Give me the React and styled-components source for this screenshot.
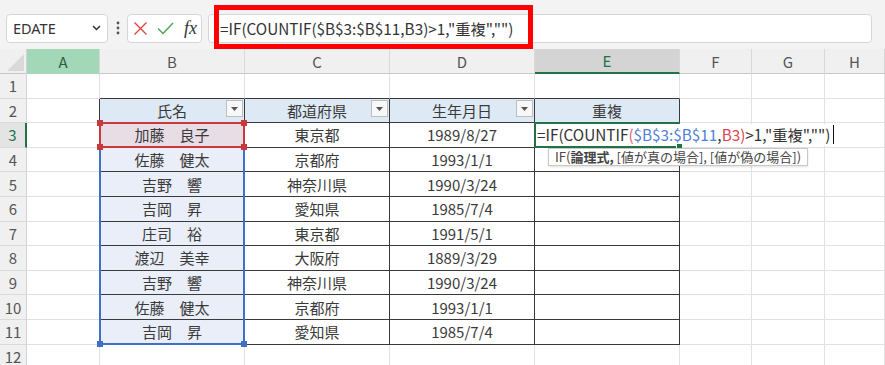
import React from 'react';
import styled, { createGlobalStyle, css } from 'styled-components';

const Global = createGlobalStyle`
  html, body { margin: 0; padding: 0; background: #fff; overflow: hidden; }
  body { font-family: "Noto Sans CJK JP", "Noto Sans", sans-serif; }
`;

const Page = styled.div`
  width: 885px;
  height: 365px;
  overflow: hidden;
  background: #fff;
`;

const Toolbar = styled.div`
  position: relative;
  height: 49px;
  box-sizing: border-box;
  background: #f3f3f3;
  display: flex;
  align-items: center;
  padding: 7px 13px 0 6px;
`;

const NameBox = styled.div`
  width: 102px;
  height: 29px;
  box-sizing: border-box;
  background: #fff;
  border: 1px solid #d6d6d6;
  border-radius: 4px;
  display: flex;
  align-items: center;
  justify-content: space-between;
  padding: 0 6px 0 6px;
  font-family: "Noto Sans", sans-serif;
  font-size: 14.5px;
  color: #333;
`;

const Dots = styled.svg`
  margin: 0 7px 0 8px;
  flex-shrink: 0;
`;

const FnBox = styled.div`
  width: 75px;
  height: 29px;
  box-sizing: border-box;
  background: #fff;
  border: 1px solid #d6d6d6;
  border-radius: 4px;
  display: flex;
  align-items: center;
  padding-left: 5px;
  gap: 9px;
`;

const Fx = styled.span`
  font-family: "Liberation Serif", serif;
  font-style: italic;
  font-size: 18px;
  color: #333;
  line-height: 1;
  margin-left: 1px;
`;

const FormulaInput = styled.div`
  flex: 1;
  height: 29px;
  margin-left: 6px;
  box-sizing: border-box;
  background: #fff;
  border: 1px solid #d6d6d6;
  border-radius: 4px;
  display: flex;
  align-items: center;
  padding-left: 11px;
  font-size: 15.3px;
  color: #333;
  white-space: nowrap;
`;

const Annotation = styled.div`
  position: absolute;
  left: 214px;
  top: 5px;
  width: 319px;
  height: 44px;
  box-sizing: border-box;
  border: 5px solid #ff0000;
  pointer-events: none;
`;

const Sheet = styled.div`
  position: relative;
  display: grid;
  grid-template-columns: 27px 73px 145px 145px 145px 145px 72px 73px 60px;
  grid-template-rows: 25px repeat(12, 24.6px);
  font-family: "Noto Sans CJK JP", sans-serif;
  line-height: 1;
`;

const placed = css`
  grid-row: ${(p) => p.$r};
  grid-column: ${(p) => p.$c};
`;

const Corner = styled.div`
  ${placed}
  background: #f0f0f0;
  border-right: 1px solid #d4d4d4;
  border-bottom: 1px solid #c8c8c8;
  display: flex;
  align-items: flex-end;
  justify-content: flex-end;
  padding: 0 2px 2px 0;
  box-sizing: border-box;
`;

const headStyles = {
  green: { bg: '#a2d7b8', color: '#2d5e40', bottom: '1px solid #a2d7b8' },
  sel: { bg: '#d4d4d4', color: '#217346', bottom: '2px solid #217346' },
  none: { bg: '#f0f0f0', color: '#555', bottom: '1px solid #c8c8c8' },
};

const ColHead = styled.div`
  ${placed}
  box-sizing: border-box;
  background: ${(p) => headStyles[p.$state].bg};
  color: ${(p) => headStyles[p.$state].color};
  border-bottom: ${(p) => headStyles[p.$state].bottom};
  border-right: 1px solid #d8d8d8;
  display: flex;
  align-items: center;
  justify-content: center;
  font-size: 15px;
`;

const RowHead = styled.div`
  ${placed}
  box-sizing: border-box;
  background: ${(p) => (p.$active ? '#e4e4e4' : '#f0f0f0')};
  color: ${(p) => (p.$active ? '#217346' : '#555')};
  border-right: ${(p) => (p.$active ? '2px solid #217346' : '1px solid #d4d4d4')};
  border-bottom: 1px solid #dadada;
  display: flex;
  align-items: center;
  justify-content: center;
  font-size: 15px;
`;

const Cell = styled.div`
  ${placed}
  box-sizing: border-box;
  background: ${(p) => p.$bg};
  border-right: 1px solid ${(p) => p.$right};
  border-bottom: 1px solid ${(p) => p.$bottom};
  display: flex;
  align-items: center;
  justify-content: center;
  font-size: 15px;
  color: #3a3a3a;
  white-space: nowrap;
`;

const HeadCell = styled(Cell)`
  display: grid;
  grid-template-columns: 1fr auto 1fr;
  align-items: center;
`;

const HeadLabel = styled.span`
  grid-column: 2;
`;

const FilterBtn = styled.div`
  grid-column: 3;
  justify-self: end;
  width: 17px;
  height: 17px;
  margin: -3px 1px 0 0;
  box-sizing: border-box;
  border: 1px solid #bdbdbd;
  background: #f8f8f8;
  display: flex;
  align-items: center;
  justify-content: center;
`;

const RangeBox = styled.div`
  ${placed}
  position: relative;
  margin: -1px 0 0 -1px;
  border: 2px solid ${(p) => p.$color};
  z-index: ${(p) => p.$z};
  pointer-events: none;
`;

const Handle = styled.div`
  position: absolute;
  width: 6px;
  height: 6px;
  background: ${(p) => p.$color};
  ${(p) => (p.$v === 'top' ? 'top: -4px;' : 'bottom: -4px;')}
  ${(p) => (p.$h === 'left' ? 'left: -4px;' : 'right: -4px;')}
`;

const EditBox = styled.div`
  ${placed}
  position: relative;
  margin: -1px 0 0 -1px;
  border: 2px solid #217346;
  border-right: none;
  z-index: 3;
  display: flex;
  align-items: stretch;
`;

const EditText = styled.div`
  flex-shrink: 0;
  background: #fff;
  display: flex;
  align-items: center;
  padding: 0 3px 0 1px;
  white-space: nowrap;
  font-size: 15.3px;
  color: #333;
`;

const Tok = styled.span`
  color: ${(p) => p.$c || '#333'};
`;

const Caret = styled.span`
  display: inline-block;
  width: 1px;
  height: 19px;
  background: #111;
  margin-left: 3px;
`;

const FillHandle = styled.div`
  position: absolute;
  right: -3px;
  bottom: -4px;
  width: 5px;
  height: 5px;
  background: #217346;
  border: 1px solid #fff;
`;

const Tip = styled.div`
  position: absolute;
  top: calc(100% + 2px);
  left: 12px;
  height: 18px;
  box-sizing: border-box;
  display: flex;
  align-items: center;
  padding: 0 6px;
  background: #fff;
  border: 1px solid #c8c8c8;
  box-shadow: 0 1px 2px rgba(0, 0, 0, 0.12);
  font-size: 13px;
  color: #444;
  white-space: nowrap;
  z-index: 4;
`;

const cols = ['A', 'B', 'C', 'D', 'E', 'F', 'G', 'H'];
const names = ['加藤　良子', '佐藤　健太', '吉野　響', '吉岡　昇', '庄司　裕', '渡辺　美幸', '吉野　響', '佐藤　健太', '吉岡　昇'];
const prefs = ['東京都', '京都府', '神奈川県', '愛知県', '東京都', '大阪府', '神奈川県', '京都府', '愛知県'];
const dates = ['1989/8/27', '1993/1/1', '1990/3/24', '1985/7/4', '1991/5/1', '1889/3/29', '1990/3/24', '1993/1/1', '1985/7/4'];
const heads = ['氏名', '都道府県', '生年月日', '重複'];

const DARK = '#3a3a3a';
const LIGHT = '#e1e1e1';

const Triangle = () => (
  <svg width="7" height="4" viewBox="0 0 7 4">
    <polygon points="0,0 7,0 3.5,4" fill="#555" />
  </svg>
);

function renderCell(r, ci) {
  const inTableRow = r >= 2 && r <= 11;
  const right = ci <= 4 && inTableRow ? DARK : LIGHT;
  const bottom = ci >= 1 && ci <= 4 && r >= 1 && r <= 11 ? DARK : LIGHT;
  let bg = '#fff';
  if (r === 2 && ci >= 1 && ci <= 4) bg = '#dde9f5';
  else if (ci === 1 && r === 3) bg = '#e8dce5';
  else if (ci === 1 && r >= 4 && r <= 11) bg = '#e9eef8';

  const key = `${r}-${ci}`;
  const pos = { $r: r + 1, $c: ci + 2 };
  if (r === 2 && ci >= 1 && ci <= 4) {
    return (
      <HeadCell key={key} {...pos} $bg={bg} $right={right} $bottom={bottom}>
        <HeadLabel>{heads[ci - 1]}</HeadLabel>
        {ci <= 3 && (
          <FilterBtn>
            <Triangle />
          </FilterBtn>
        )}
      </HeadCell>
    );
  }
  let text = '';
  if (r >= 3 && r <= 11) {
    const i = r - 3;
    if (ci === 1) text = names[i];
    if (ci === 2) text = prefs[i];
    if (ci === 3) text = dates[i];
  }
  return (
    <Cell key={key} {...pos} $bg={bg} $right={right} $bottom={bottom}>
      {text}
    </Cell>
  );
}

export default function App() {
  const rows = [];
  for (let r = 1; r <= 12; r++) {
    rows.push(
      <RowHead key={`rh${r}`} $r={r + 1} $c={1} $active={r === 3}>
        {r}
      </RowHead>
    );
    for (let ci = 0; ci < cols.length; ci++) rows.push(renderCell(r, ci));
  }

  return (
    <Page>
      <Global />
      <Toolbar>
        <NameBox>
          <span>EDATE</span>
          <svg width="9" height="6" viewBox="0 0 9 6">
            <path d="M1 1 L4.5 4.5 L8 1" fill="none" stroke="#333" strokeWidth="1.5" />
          </svg>
        </NameBox>
        <Dots width="4" height="14" viewBox="0 0 4 14">
          <circle cx="2" cy="2" r="1.4" fill="#555" />
          <circle cx="2" cy="7" r="1.4" fill="#555" />
          <circle cx="2" cy="12" r="1.4" fill="#555" />
        </Dots>
        <FnBox>
          <svg width="15" height="15" viewBox="0 0 15 15">
            <path d="M1.5 1.5 L13.5 13.5 M13.5 1.5 L1.5 13.5" stroke="#e2453f" strokeWidth="1.4" fill="none" />
          </svg>
          <svg width="17" height="13" viewBox="0 0 17 13">
            <path d="M1 6.5 L6 11.5 L16 1" stroke="#4aa65a" strokeWidth="1.5" fill="none" />
          </svg>
          <Fx>fx</Fx>
        </FnBox>
        <FormulaInput>=IF(COUNTIF($B$3:$B$11,B3)&gt;1,"重複","")</FormulaInput>
        <Annotation />
      </Toolbar>
      <Sheet>
        <Corner $r={1} $c={1}>
          <svg width="17" height="17" viewBox="0 0 17 17">
            <polygon points="17,0 17,17 0,17" fill="#d9d9d9" />
          </svg>
        </Corner>
        {cols.map((c, i) => (
          <ColHead key={c} $r={1} $c={i + 2} $state={c === 'A' ? 'green' : c === 'E' ? 'sel' : 'none'}>
            {c}
          </ColHead>
        ))}
        {rows}
        <RangeBox $c={3} $r="4 / 13" $color="#3f6fc6" $z={2}>
          <Handle $color="#3f6fc6" $v="bottom" $h="left" />
          <Handle $color="#3f6fc6" $v="bottom" $h="right" />
        </RangeBox>
        <RangeBox $c={3} $r={4} $color="#c8393d" $z={3}>
          <Handle $color="#c8393d" $v="top" $h="left" />
          <Handle $color="#c8393d" $v="top" $h="right" />
          <Handle $color="#c8393d" $v="bottom" $h="left" />
          <Handle $color="#c8393d" $v="bottom" $h="right" />
        </RangeBox>
        <EditBox $c={6} $r={4}>
          <EditText>
            <Tok>=IF(COUNTIF</Tok>
            <Tok $c="#e0606a">(</Tok>
            <Tok $c="#4f7fd6">$B$3:$B$11</Tok>
            <Tok>,</Tok>
            <Tok $c="#d9454f">B3</Tok>
            <Tok $c="#d9454f">)</Tok>
            <Tok>&gt;1,"重複","")</Tok>
            <Caret />
          </EditText>
          <FillHandle />
          <Tip>
            IF(<b>論理式,</b>&nbsp;[値が真の場合], [値が偽の場合])
          </Tip>
        </EditBox>
      </Sheet>
    </Page>
  );
}
